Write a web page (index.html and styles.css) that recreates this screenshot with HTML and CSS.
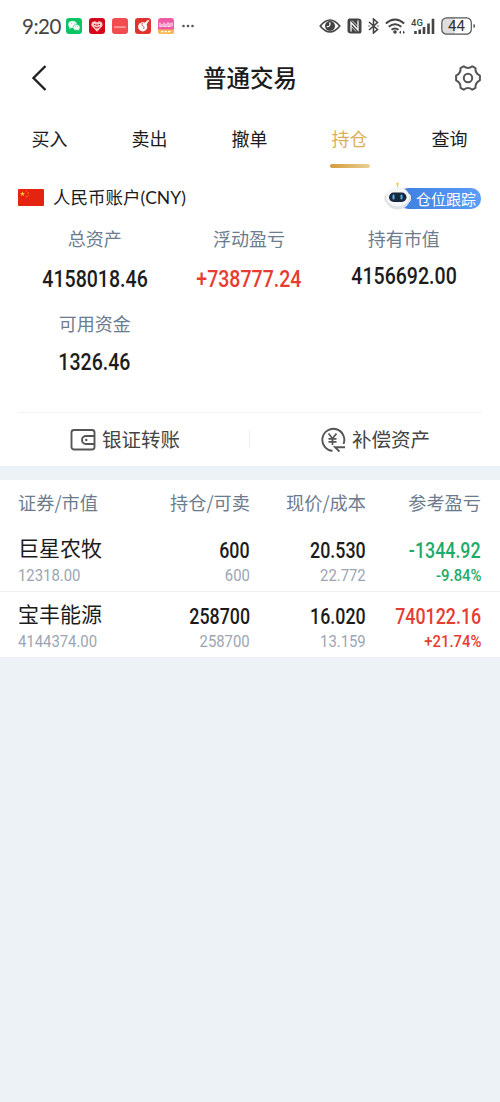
FILE: index.html
```html
<!DOCTYPE html>
<html lang="zh-CN">
<head>
    <meta charset="UTF-8">
    <meta name="viewport" content="width=device-width, initial-scale=1.0">
    <title>普通交易</title>
    <link rel="stylesheet" href="styles.css">
</head>
<body>

    <div class="status">
        <span class="time">9:20</span>
        <div class="apps">
            <svg width="16" height="16" viewBox="0 0 16 16">
                <rect width="16" height="16" rx="3" fill="#0bc464"/>
                <ellipse cx="6.5" cy="6.6" rx="4.2" ry="3.5" fill="#fff"/>
                <ellipse cx="10.5" cy="9.4" rx="3.5" ry="2.9" fill="#fff" stroke="#0bc464" stroke-width=".6"/>
                <path d="M3.8 9l-.5 2 2-1zM12 11.5l1.2 1.3-.2-2z" fill="#fff"/>
                <path d="M5 5.7h.8M7.8 5.7h.8M9 8.8h.7M11.3 8.8h.7" stroke="#0bc464" stroke-width=".8"/>
            </svg>
            <svg width="16" height="16" viewBox="0 0 16 16">
                <rect width="16" height="16" rx="3" fill="#d4061b"/>
                <path d="M8 13.7L3 8.6C.8 5.6 4.8 1.2 8 4.4c3.2-3.2 7.2 1.2 5 4.2z" fill="#f8c9c4"/>
                <path d="M5 6.5h1.500M9.500 6.500H11M5.500 9q2.500 2 5 0M8 6v2" fill="none" stroke="#d4061b" stroke-width=".9"/>
            </svg>
            <svg width="16" height="16" viewBox="0 0 16 16">
                <rect width="16" height="16" rx="3" fill="#f24c50"/>
                <path d="M2.5 9.2h11" stroke="#ffb6b2" stroke-width="1.8" stroke-dasharray="1.4 .5"/>
            </svg>
            <svg width="16" height="16" viewBox="0 0 16 16">
                <rect width="16" height="16" rx="3" fill="#e0332d"/>
                <circle cx="7.7" cy="8.8" r="4.6" fill="#fff"/>
                <path d="M9 6l3-3.5 2.5-.5-2.3 3.5L10 8z" fill="#fff"/>
                <path d="M3 2l3 3.3M7.5 5c-1 1.5-.5 3 .8 3.5s1.2 2-.5 2.2" fill="none" stroke="#e0332d" stroke-width=".8"/>
            </svg>
            <svg width="16" height="16" viewBox="0 0 16 16">
                <rect width="16" height="16" rx="3" fill="#ef5ba4"/>
                <path d="M0 11.5h16V13a3 3 0 0 1-3 3H3a3 3 0 0 1-3-3z" fill="#f8ba55"/>
                <path d="M2 4.500v4h2V6M6 4.500v4h2V5.500M10 4v4.500h2V5M14 4.500v4" fill="none" stroke="#ffe3f3" stroke-width="1.200"/>
                <path d="M3 13.600h10" stroke="#fff" stroke-width="1.300" stroke-dasharray="2.300 1.200"/>
            </svg>
        </div>
        <svg class="more" width="12" height="4" viewBox="0 0 12 4" fill="#555">
            <circle cx="1.5" cy="2" r="1.3"/><circle cx="6" cy="2" r="1.3"/><circle cx="10.5" cy="2" r="1.3"/>
        </svg>

        <div class="signals">
            <svg width="22" height="16" viewBox="0 0 22 16">
                <path d="M1.2 8Q11-4 20.800 8 11 20 1.200 8z" fill="none" stroke="#444" stroke-width="1.600"/>
                <circle cx="11" cy="8" r="5" fill="#444"/>
                <path d="M10.500 4.500a2.500 2.500 0 0 1-2.700 4" fill="none" stroke="#fff" stroke-width="1.200"/>
            </svg>
            <svg width="15" height="16" viewBox="0 0 15 16">
                <path d="M2.500.5H11q3.500 0 3.500 3v9q0 3-1.500 3H4q-3.500 0-3.500-3v-9q0-3 2-3z" fill="#444"/>
                <path d="M4 13.500V4.500l7 7.500V2.500" fill="none" stroke="#fff" stroke-width="1.300"/>
                <path d="M5 2.500l6 6M4 8l5 5.500" fill="none" stroke="#fff" stroke-width=".8"/>
            </svg>
            <svg width="11" height="16" viewBox="0 0 11 16" fill="none" stroke="#444" stroke-width="1.600">
                <path d="M1 4l8.500 7.500-4 3.500V1l4 3.500L1 12"/>
                <path d="M.5 8h1M9.500 8h1"/>
            </svg>
            <svg width="20" height="16" viewBox="0 0 20 16" fill="none" stroke="#444" stroke-width="1.900">
                <path d="M.8 5.500q9.200-8 18.400 0M3.700 8.800q6.300-5.200 12.600 0M6.500 11.800q3.500-2.700 7 0"/>
                <circle cx="10" cy="14" r="1.800" fill="#444" stroke="none"/>
                <path d="M14 14.200l2-1.800v3.600zM20 14.200L18 12.400v3.600z" fill="#444" stroke="none"/>
            </svg>
            <svg width="24" height="17" viewBox="0 0 24 17">
                <text class="net" x="0" y="8">4G</text>
                <path d="M4.500 13v3M8.700 11.500V16M13 9v7M17.500 5.500V16M22 .8V16" stroke="#444" stroke-width="2.600"/>
            </svg>
            <svg width="35" height="18" viewBox="0 0 35 18">
                <path d="M6 1h8v16H6q-5 0-5-5V6q0-5 5-5z" fill="#dedede"/>
                <rect x=".8" y=".8" width="29.500" height="16.400" rx="4.800" fill="none" stroke="#555" stroke-width="1.200"/>
                <path d="M32.500 7q1.500 0 1.500 2t-1.500 2z" fill="#444"/>
                <text class="level" x="15.500" y="14.300">44</text>
            </svg>
        </div>
    </div>

    <header class="topbar">
        <svg width="24" height="30" viewBox="0 0 24 30" fill="none" stroke="#222" stroke-width="2.400">
            <path d="M17.500 3L5.500 15l12 12"/>
        </svg>
        <h1>普通交易</h1>
        <svg width="28" height="28" viewBox="0 0 28 28" fill="none" stroke="#555" stroke-width="2" stroke-linejoin="round">
            <path d="M9.700 2.300Q14 5.600 18.300 2.300L21.500 4.200Q20.900 9.200 25.900 11.700V16.300Q20.900 18.800 21.500 23.800L18.300 25.700Q14 22.400 9.700 25.700L6.500 23.800Q7.100 18.800 2.100 16.300V11.700Q7.100 9.200 6.500 4.200z"/>
            <circle cx="14" cy="14" r="4.200"/>
        </svg>
    </header>

    <nav class="tabs">
        <a>买入</a>
        <a>卖出</a>
        <a>撤单</a>
        <a class="active">持仓</a>
        <a>查询</a>
    </nav>

    <div class="account">
        <svg width="26" height="17" viewBox="0 0 26 17">
            <rect width="26" height="17" rx="1" fill="#e42310"/>
            <path d="M4.500 2.200l.7 1.800h1.900L5.600 5.200l.5 1.900-1.600-1.100L2.900 7.100l.5-1.900L1.900 4h1.900z" fill="#ffc42e"/>
            <g fill="#f7a022"><circle cx="8.700" cy="2" r=".6"/><circle cx="10.200" cy="3.700" r=".6"/><circle cx="10.200" cy="6" r=".6"/><circle cx="8.700" cy="7.700" r=".6"/></g>
        </svg>
        <span class="currency">人民币账户(CNY)</span>
        <div class="track">
            <svg class="robot" width="28" height="28" viewBox="0 0 28 28">
                <path d="M13.500 7V2.500" stroke="#b6bfc7" stroke-width="1"/>
                <circle cx="13.500" cy="2" r="1.400" fill="#f5d264"/>
                <ellipse cx="2.500" cy="16" rx="2" ry="4" fill="#d9dde3"/>
                <ellipse cx="25" cy="16" rx="2" ry="4" fill="#e8ebf0"/>
                <ellipse cx="13.700" cy="16.500" rx="12.200" ry="11" fill="#dfe2e7"/>
                <ellipse cx="13.700" cy="14.800" rx="11.500" ry="9.500" fill="#f6f7f9"/>
                <rect x="5" y="10.500" width="17.500" height="9.500" rx="4.700" fill="#17283f"/>
                <path d="M9.500 13.500v3M17.500 13.500v3" stroke="#54b5ed" stroke-width="2" stroke-linecap="round"/>
            </svg>
            <span>仓位跟踪</span>
        </div>
    </div>

    <section class="summary">
        <div class="stat">
            <label>总资产</label>
            <b>4158018.46</b>
        </div>
        <div class="stat">
            <label>浮动盈亏</label>
            <b class="red">+738777.24</b>
        </div>
        <div class="stat raised">
            <label>持有市值</label>
            <b>4156692.00</b>
        </div>
        <div class="stat">
            <label>可用资金</label>
            <b>1326.46</b>
        </div>
    </section>

    <div class="actions">
        <a>
            <svg width="26" height="24" viewBox="0 0 26 24" fill="none" stroke="#555" stroke-width="1.900">
                <rect x="1.500" y="2" width="23" height="19.500" rx="2.500"/>
                <path d="M24.500 8H16a4 4 0 0 0 0 8h8.500"/>
                <circle cx="16.300" cy="12" r="1.200" fill="#555" stroke="none"/>
            </svg>
            <span>银证转账</span>
        </a>
        <a>
            <svg width="26" height="26" viewBox="0 0 26 26" fill="none" stroke="#555" stroke-width="1.900">
                <path d="M12.500 23.800A11 11 0 1 1 23.500 17"/>
                <path d="M25 20.200H15l4.500 4.500"/>
                <path d="M8.500 6.500l4 5 4-5M12.500 11.500V18M8.500 11.800h8M8.500 14.800h8" stroke-width="1.700"/>
            </svg>
            <span>补偿资产</span>
        </a>
    </div>

    <section class="holdings">
        <div class="row head">
            <span>证券/市值</span>
            <span>持仓/可卖</span>
            <span>现价/成本</span>
            <span>参考盈亏</span>
        </div>
        <div class="row">
            <div><strong>巨星农牧</strong><small>12318.00</small></div>
            <div><b>600</b><small>600</small></div>
            <div><b>20.530</b><small>22.772</small></div>
            <div class="green"><b>-1344.92</b><small>-9.84%</small></div>
        </div>
        <div class="row">
            <div><strong>宝丰能源</strong><small>4144374.00</small></div>
            <div><b>258700</b><small>258700</small></div>
            <div><b>16.020</b><small>13.159</small></div>
            <div class="red"><b>740122.16</b><small>+21.74%</small></div>
        </div>
    </section>

</body>
</html>
```
FILE: styles.css
```css
* {
    box-sizing: border-box;
}

body {
    margin: 0;
    min-height: 1102px;
    background-color: #edf2f6;
    color: #1c1c1c;
    font-family: "Noto Sans CJK SC", sans-serif;
}

svg {
    flex: none;
    display: block;
}

/* status bar */
.status {
    height: 50px;
    padding: 2px 24px 0 22px;
    display: flex;
    align-items: center;
    background-color: #fff;
}

.time {
    width: 44px;
    font-family: Lato, sans-serif;
    font-size: 20.5px;
    letter-spacing: -0.5px;
    color: #444;
}

.apps {
    display: flex;
    gap: 7px;
}

.more {
    margin-left: 8px;
}

.signals {
    margin-left: auto;
    display: flex;
    align-items: center;
    gap: 6px;
}

.net {
    font: 500 9.5px Roboto, sans-serif;
    fill: #444;
}

.level {
    font: 400 15px Roboto, sans-serif;
    text-anchor: middle;
    fill: #333;
}

/* title and tabs */
.topbar {
    height: 58px;
    padding: 0 18px 2px 28px;
    display: flex;
    align-items: center;
    justify-content: space-between;
    background-color: #fff;
}

h1 {
    margin: -2px 0 0;
    font-size: 23.5px;
    font-weight: 500;
    line-height: 30px;
    padding-right: 6px;
}

.tabs {
    height: 64px;
    display: flex;
    background-color: #fff;
}

.tabs a {
    flex: 1;
    display: flex;
    flex-direction: column;
    align-items: center;
    padding: 15px 1px 0 0;
    font-size: 18px;
    line-height: 30px;
}

.tabs .active {
    color: #dcae5c;
}

.active::after {
    content: "";
    width: 40px;
    height: 4px;
    margin-top: 11px;
    border-radius: 2px;
    background: linear-gradient(90deg, #d29c3c, #ecd094);
}

/* account */
.account {
    height: 50px;
    padding: 0 19px 0 18px;
    display: flex;
    align-items: center;
    background-color: #fff;
}

.currency {
    margin: -2px 0 0 9px;
    font-family: Lato, "Noto Sans CJK SC", sans-serif;
    font-size: 17.5px;
}

.track {
    position: relative;
    margin: 3px 0 0 auto;
    height: 21px;
    padding: 0 5px 0 18px;
    border-radius: 10px;
    background: linear-gradient(90deg, #3d7fe0, #5b9df8);
    color: #fff;
    font-size: 15px;
    line-height: 21px;
}

.robot {
    position: absolute;
    left: -14px;
    top: -6px;
}

/* totals */
.summary {
    height: 190px;
    padding: 1px 19px 0 17px;
    display: grid;
    grid-template-columns: repeat(3, 1fr);
    grid-template-rows: 85px 85px;
    background-color: #fff;
}

.stat {
    display: flex;
    flex-direction: column;
    align-items: center;
}

.stat label {
    color: #6c7c8e;
    font-size: 18px;
    line-height: 30px;
}

.stat b {
    margin-top: 12px;
    font-family: Roboto, sans-serif;
    font-size: 23px;
    font-weight: 500;
    line-height: 30px;
    transform: scaleX(0.85);
}

.stat:first-child,
.stat:nth-child(4) {
    padding-left: 1px;
}

.raised b {
    margin-top: 9px;
}

.stat:nth-child(4) b {
    margin-top: 10px;
}

/* transfer buttons */
.actions {
    height: 54px;
    margin: 0 0 14px;
    padding: 0 18px;
    display: flex;
    background: linear-gradient(#f1f2f4, #f1f2f4) 18px 0 / 464px 1px no-repeat #fff;
}

.actions a {
    flex: 1;
    display: flex;
    align-items: center;
    justify-content: center;
    gap: 6px;
    padding-top: 2px;
    font-size: 19.5px;
    color: #444;
}

.actions span {
    margin-top: -3px;
}

.actions a:first-child {
    padding-right: 18px;
    background: linear-gradient(#eff0f2, #eff0f2) right 50% / 1px 18px no-repeat;
}

.actions a:last-child {
    padding-left: 18px;
}

/* holdings */
.holdings {
    background-color: #fff;
}

.row {
    height: 66px;
    padding: 0 19px 0 18px;
    display: grid;
    grid-template-columns: 106px 126px 116px 1fr;
    text-align: right;
    border-top: 1px solid #eef0f3;
}

.row > :first-child {
    text-align: left;
}

.head {
    height: 45px;
    border-top: none;
    color: #6c7c8e;
    font-size: 18.2px;
    line-height: 44px;
}

.head + .row {
    border-top-color: #fff;
}

.row > div {
    display: flex;
    flex-direction: column;
    align-items: flex-end;
}

.row > div:first-child {
    align-items: flex-start;
}

.row strong {
    height: 37px;
    font-size: 21px;
    font-weight: 400;
    line-height: 42px;
}

.row b {
    height: 37px;
    font-family: Roboto, sans-serif;
    font-size: 22px;
    font-weight: 500;
    line-height: 49px;
    transform: scaleX(0.81);
    transform-origin: right;
}

.row small {
    font-family: Roboto, sans-serif;
    font-size: 16.5px;
    line-height: 25px;
    color: #9ba5b3;
    transform: scaleX(0.9);
    transform-origin: right;
}

.row > div:first-child small {
    transform-origin: left;
}

.green small,
.red small {
    font-weight: 500;
}

.stat .red,
.red b,
.row .red small {
    color: #e63c32;
}

.green b,
.row .green small {
    color: #1dac68;
}
```
